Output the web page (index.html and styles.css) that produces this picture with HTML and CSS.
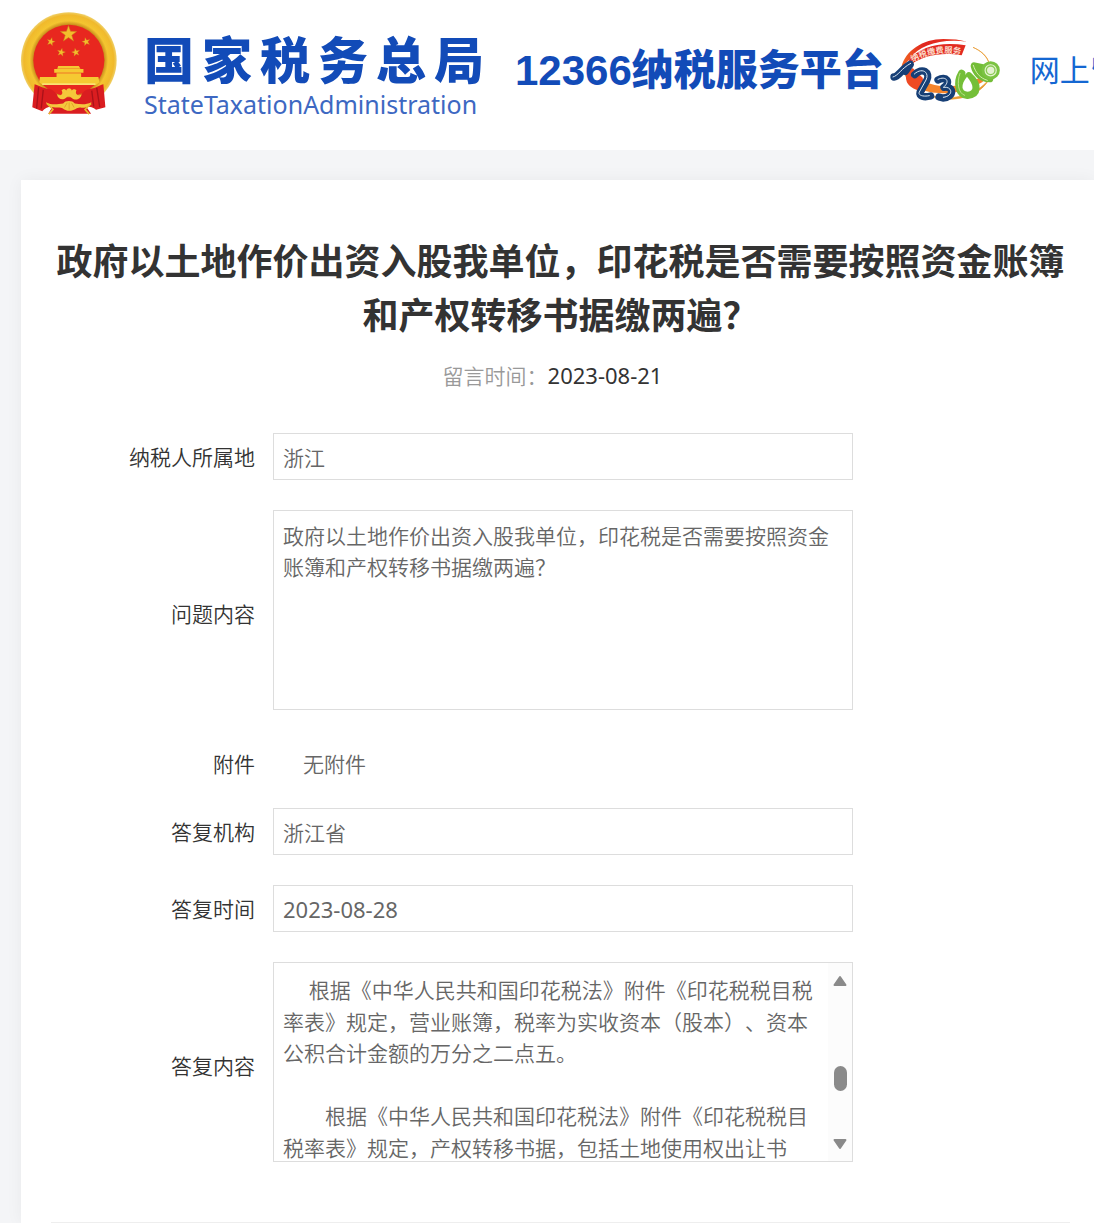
FILE: index.html
```html
<!DOCTYPE html>
<html lang="zh-CN">
<head>
<meta charset="utf-8">
<meta name="viewport" content="width=device-width, initial-scale=1">
<title>12366纳税服务平台</title>
<link rel="stylesheet" href="styles.css">
</head>
<body>
<header class="header">
  <svg class="emblem" viewBox="60 33 295 312" aria-hidden="true">
    <defs>
      <path id="star" d="M0-10 2.4-3.2 9.5-3.1 3.8 1.2 5.9 8.1 0 4-5.9 8.1-3.8 1.2-9.5-3.1-2.4-3.2Z"/>
      <radialGradient id="gold" cx=".5" cy=".5" r=".5">
        <stop offset=".74" stop-color="#c98d1c"/><stop offset=".82" stop-color="#f4c530"/>
        <stop offset=".94" stop-color="#f0b92c"/><stop offset="1" stop-color="#efd069"/>
      </radialGradient>
    </defs>
    <ellipse cx="207" cy="181" rx="144" ry="145" fill="url(#gold)"/>
    <circle cx="207" cy="181" r="107" fill="#e8271f"/>
    <g fill="#f3bd2c" stroke="#c97a1c" stroke-width=".6">
      <use href="#star" transform="translate(206 102) scale(2.6)"/>
      <use href="#star" transform="translate(153 125) rotate(15) scale(1.3)"/>
      <use href="#star" transform="translate(259 125) rotate(-15) scale(1.3)"/>
      <use href="#star" transform="translate(184 157) rotate(12) scale(1.3)"/>
      <use href="#star" transform="translate(228 157) rotate(-12) scale(1.3)"/>
    </g>
    <g fill="#f5c932">
      <path d="M175 198h62l5 8h-70zM163 207h88v11h-88zM170 220h74v12h-74zM120 231h176l3 16-10 8H127l-9-8z"/>
      <path d="M127 250h160v5H127z" fill="#fae273"/>
    </g>
    <path d="M104 253c18 6 28 13 42 14 18 1 22 18 38 25h46c18-7 22-23 38-25 18-1 28-10 43-14l6 69-28 8c-8-8-18-10-30-10l15 22H145l13-22c-13 0-24 5-31 14l-30-12z" fill="#da1d20"/>
    <path d="M116 262l-6 64m20-56-6 56m167-62 9 58m-24-50 6 48" stroke="#a91219" stroke-width="4" fill="none"/>
    <path d="M171 282c12 11 21-1 14-10 8-8 12-4 14 0 4-9 14-9 17 0 3-5 10-6 14 0-6 9 5 21 16 10-4 19-21 20-30 12-8-6-12-6-18 0-9 8-24 5-27-12z" fill="#f5c73a"/>
    <path d="M138 307c20 11 37 5 52 4 6-10 28-10 35 0 16 2 33 5 50-4-5 15-20 18-33 16-12-1-17 10-34 10-15 0-18-11-31-10-16 1-34-2-39-16z" fill="#f4c83e"/>
    <path d="M194 323l8-14m6 20v-21m15 15-8-14" stroke="#d9951c" stroke-width="2"/>
    <path d="M141 311l18 18-12 14M274 311l-18 18 12 14" stroke="#e9b62e" stroke-width="5" fill="none"/>
  </svg>
  <div class="brand">
    <div class="brand-name">国家税务总局</div>
    <div class="brand-sub">StateTaxationAdministration</div>
  </div>
  <div class="platform">12366纳税服务平台</div>
  <svg class="mark" viewBox="30 24 333 195" role="img" aria-label="12366">
    <defs>
      <linearGradient id="flame" x1="0" x2="1"><stop offset="0" stop-color="#f26722"/><stop offset=".35" stop-color="#e0251f"/><stop offset="1" stop-color="#ea3a22"/></linearGradient>
      <path id="arc" d="M97 96Q165 58 250 74"/>
    </defs>
    <path d="M64 112C76 62 128 27 190 27c28 0 50 2 71 8-78-10-144 10-170 51z" fill="url(#flame)"/>
    <path d="M86 91C120 49 184 34 257 46l-12 30c-60-11-112 0-149 25z" fill="#e22b20"/>
    <path d="M74 130c8 55 111 77 199 45l36-20-5-15c-84 49-185 33-211-25z" fill="#f5842b"/>
    <path d="M79 132c-7 35 22 47 56 55l-7-44-30-29z" fill="#ef4a24"/>
    <path d="M132 190c68 27 155 12 196-44-31 62-132 78-196 44M279 52c25 11 44 27 49 50-7-24-27-41-49-50" fill="#e99a31" stroke="#e99a31" stroke-width="2"/>
    <text class="mark-arc"><textPath href="#arc">纳税缴费服务</textPath></text>
    <g fill="none" stroke-linecap="round" stroke-linejoin="round">
      <g stroke="#173f76" stroke-width="22">
        <path d="M42 141C56 140 66 116 91 103L76 124"/>
        <path d="M104 134c22-24 49-7 36 18l-20 35c-4 12 12 16 32 11"/>
        <path d="M174 150c25-14 40 7 18 22 31-5 31 30-3 32l-12-3"/>
      </g>
      <g stroke="#dce8f3" stroke-width="3">
        <path d="M39 141C54 138 64 115 92 100"/>
        <path d="M103 132c22-21 47-6 35 18l-20 36c-5 10 12 15 30 11"/>
        <path d="M174 148c25-12 38 7 16 24 29-4 31 27 0 30"/>
      </g>
      <path d="M245 130c-16 27-9 68 18 66 32-3 33-33 4-58" fill="#74bf38" stroke="#74bf38" stroke-width="22"/>
      <path d="M240 130c-10 27-6 60 14 66" stroke="#bce18b" stroke-width="3"/>
      <path d="M283 108c4 18 18 38 46 38l-10-30z" fill="#73bd37" stroke="#73bd37" stroke-width="22"/>
      <circle cx="332" cy="121" r="23" fill="#e5f3d1" stroke="#7bc342" stroke-width="9"/>
      <circle cx="332" cy="121" r="13" stroke="#8aca54" stroke-width="4"/>
      <path d="M280 106c7 22 19 38 42 45" stroke="#d3edae" stroke-width="3"/>
    </g>
    <path d="M261 140c-20 24-17 44 2 45 20-2 19-20-2-45" fill="#fff"/>
  </svg>
  <nav class="nav"><a href="#">网上留言</a></nav>
</header>

<main class="page">
  <article class="card">
    <h1 class="title">政府以土地作价出资入股我单位，印花税是否需要按照资金账簿和产权转移书据缴两遍？</h1>
    <p class="posted">留言时间：<time class="posted-date" datetime="2023-08-21">2023-08-21</time></p>
    <form class="form">
      <div class="row">
        <label class="label" for="region">纳税人所属地</label>
        <input class="field" id="region" type="text" value="浙江" readonly>
      </div>
      <div class="row row-area">
        <label class="label" for="question">问题内容</label>
        <textarea class="field area" id="question" readonly>政府以土地作价出资入股我单位，印花税是否需要按照资金账簿和产权转移书据缴两遍？</textarea>
      </div>
      <div class="row row-file">
        <span class="label">附件</span>
        <span class="file">无附件</span>
      </div>
      <div class="row">
        <label class="label" for="agency">答复机构</label>
        <input class="field" id="agency" type="text" value="浙江省" readonly>
      </div>
      <div class="row">
        <label class="label" for="reply-date">答复时间</label>
        <input class="field field-date" id="reply-date" type="text" value="2023-08-28" readonly>
      </div>
      <div class="row row-area">
        <label class="label" for="reply">答复内容</label>
        <div class="field scroller">
          <textarea class="scroller-text" id="reply" readonly>　&nbsp;根据《中华人民共和国印花税法》附件《印花税税目税
率表》规定，营业账簿，税率为实收资本（股本）、资本
公积合计金额的万分之二点五。

　　根据《中华人民共和国印花税法》附件《印花税税目
税率表》规定，产权转移书据，包括土地使用权出让书</textarea>
          <div class="bar" aria-hidden="true">
            <svg class="arrow" viewBox="0 0 14 12"><path d="M7 2 12.500 10h-11z"/></svg>
            <span class="thumb"></span>
            <svg class="arrow" viewBox="0 0 14 12"><path d="M7 10 12.500 2h-11z"/></svg>
          </div>
        </div>
      </div>
    </form>
    <hr class="rule">
  </article>
</main>
</body>
</html>
```
FILE: styles.css
```css
* { box-sizing: border-box; }

body {
  margin: 0;
  background: #fff;
  color: #333;
  font: 350 21px/31px "Noto Sans CJK SC", sans-serif;
  text-spacing-trim: space-all;
  overflow-x: hidden;
}

.header {
  display: flex;
  align-items: flex-start;
  height: 150px;
  padding: 11px 0 0 20px;
  overflow: hidden;
  white-space: nowrap;
  color: #124bb8;
}
.header > * { flex: none; }

.emblem { width: 98px; height: 104px; }

.brand { width: 340px; margin: 16px 0 0 26px; }
.brand-name {
  font-size: 50px;
  line-height: 60px;
  font-weight: 900;
  text-align-last: justify;
}
.brand-sub {
  font: 400 25px/34px "Noto Sans", sans-serif;
  color: #3d68c2;
}

.platform {
  margin: 30px 0 0 31px;
  font: 900 42px/60px "Liberation Sans", "Noto Sans CJK SC", sans-serif;
}

.mark { width: 111px; height: 65px; margin: 27px 0 0 6px; }
.mark-arc { font-size: 25px; font-weight: 700; fill: #fbd9c8; }

.nav { margin: 35px 0 0 29px; font-size: 30px; line-height: 44px; }
.nav a { color: #1467d2; text-decoration: none; font-weight: 400; }

.page { padding: 30px 0 0 21px; background: #f4f5f7; }

.card {
  min-height: calc(100vh - 180px);
  padding: 52px 24px 0 30px;
  background: #fff;
  box-shadow: 0 0 16px rgba(0, 0, 0, .05);
}

.title {
  margin: 0;
  font-size: 36px;
  line-height: 54px;
  font-weight: 700;
  text-align: center;
}

.posted {
  margin: 20px 0 42px;
  padding-right: 16px;
  text-align: center;
  color: #999;
}
.posted-date, .field-date {
  font-family: "Noto Sans", sans-serif;
  font-size: 22px;
  font-weight: 400;
}
.posted-date { color: #333; }

.row {
  display: flex;
  align-items: center;
  gap: 18px;
  margin-bottom: 30px;
}
.label { width: 204px; text-align: right; }
.row-area .label { padding-top: 6px; }

.field {
  width: 580px;
  height: 47px;
  margin: 0;
  padding: 0 9px;
  border: 1px solid #ddd;
  border-radius: 0;
  background: #fff;
  color: #666;
  font-family: "Noto Sans CJK SC", sans-serif;
  font-size: 21px;
  font-weight: 350;
  outline: 0;
}
.field-date { font-family: "Noto Sans", sans-serif; font-size: 22px; font-weight: 400; }

.area {
  height: 200px;
  padding: 9px;
  line-height: 31px;
  resize: none;
  overflow: hidden;
}

.row-file { height: 47px; margin-bottom: 21px; }
.file { padding-left: 30px; color: #666; }

.scroller { display: flex; height: 200px; padding: 0; }
.scroller-text {
  flex: 1;
  min-width: 0;
  padding: 11px 0 0 9px;
  border: 0;
  background: none;
  color: inherit;
  font: inherit;
  line-height: 1.5;
  text-spacing-trim: space-all;
  white-space: pre;
  resize: none;
  overflow: hidden;
  outline: 0;
}
.bar {
  display: flex;
  flex-direction: column;
  justify-content: space-between;
  align-items: center;
  width: 24px;
  padding: 12px 0 11px;
  background: #fcfcfc;
}
.arrow { width: 14px; height: 12px; fill: #8a8a8a; stroke: #8a8a8a; stroke-width: 2; stroke-linejoin: round; }
.thumb { width: 13px; height: 25px; margin-top: 32px; border-radius: 7px; background: #8a8a8a; }

.rule { margin: 60px 0 0; border: 0; border-top: 1px solid #eee; }
```
